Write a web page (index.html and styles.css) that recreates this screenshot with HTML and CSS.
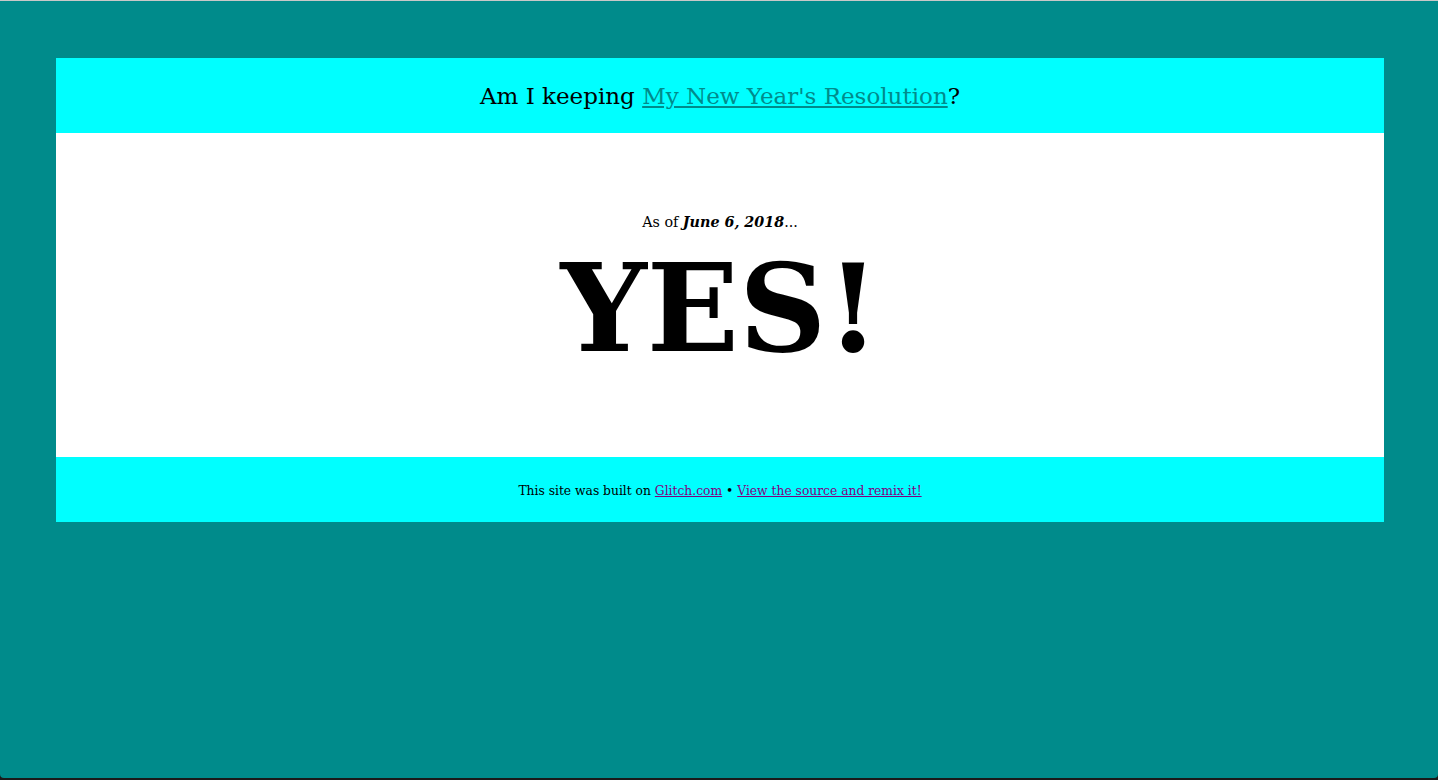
FILE: index.html
```html
<!DOCTYPE html>
<html>
<head>
<meta charset="utf-8">
<title>Am I keeping My New Year's Resolution?</title>
<link rel="stylesheet" href="styles.css">
</head>
<body>
<div class="frame">
  <div class="page">
    <header class="site-header">
      <h1 class="title">Am I keeping <a class="title-link" href="#">My New Year's Resolution</a>?</h1>
    </header>
    <main class="content">
      <p class="as-of">As of <em class="date">June 6, 2018</em>...</p>
      <p class="answer">YES!</p>
    </main>
    <footer class="site-footer">
      <p class="credits">This site was built on <a class="foot-link" href="#">Glitch.com</a> • <a class="foot-link" href="#">View the source and remix it!</a></p>
    </footer>
  </div>
</div>
</body>
</html>
```
FILE: styles.css
```css
html, body {
  margin: 0;
  padding: 0;
  height: 100%;
}
body {
  background: #1a1a1a;
  font-family: "DejaVu Serif", "Liberation Serif", serif;
}
.frame {
  box-sizing: border-box;
  height: 778px;
  background: #008b8b;
  border-top: 1px solid #c8c8c8;
  border-bottom-left-radius: 4px;
  border-bottom-right-radius: 4px;
  padding: 57px 54px 0 56px;
}
.page {
  display: flex;
  flex-direction: column;
}
.site-header {
  background: #00ffff;
  height: 75px;
  display: flex;
  align-items: center;
  justify-content: center;
}
.title {
  margin: 0;
  font-weight: normal;
  font-size: 23px;
  color: #000;
}
.title-link {
  color: #008b8b;
}
.content {
  box-sizing: border-box;
  background: #fff;
  height: 324px;
  padding-bottom: 7px;
  display: flex;
  flex-direction: column;
  align-items: center;
  justify-content: center;
}
.as-of {
  margin: 0 0 17px;
  font-size: 14.3px;
  line-height: 16.6px;
  color: #000;
}
.date {
  font-weight: bold;
}
.answer {
  margin: 0;
  font-size: 121px;
  font-weight: bold;
  line-height: 1;
  color: #000;
}
.site-footer {
  background: #00ffff;
  height: 65px;
  display: flex;
  align-items: center;
  justify-content: center;
}
.credits {
  margin: 0;
  font-size: 12.3px;
  color: #000;
  padding-top: 2px;
}
.foot-link {
  color: #800080;
}
```
